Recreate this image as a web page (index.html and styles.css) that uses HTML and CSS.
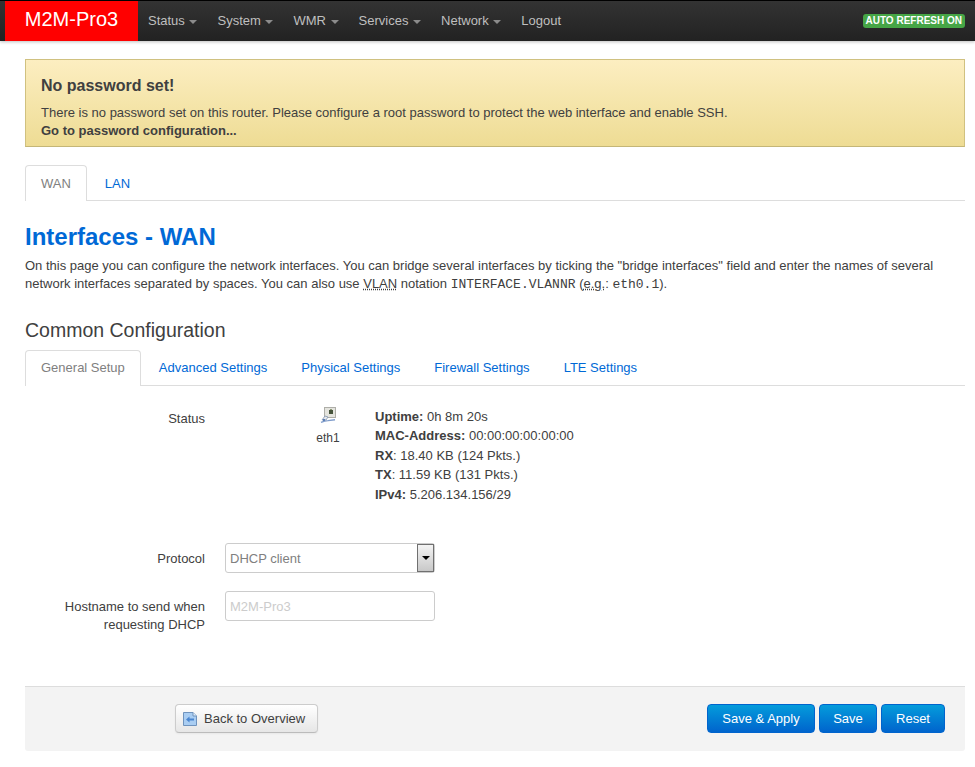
FILE: index.html
```html
<!DOCTYPE html>
<html lang="en">
<head>
    <meta charset="UTF-8">
    <title>M2M-Pro3 - Interfaces - WAN</title>
    <link rel="stylesheet" href="styles.css">
</head>
<body>
    <header class="navbar">
        <a class="brand" href="#">M2M-Pro3</a>
        <nav class="nav-menu">
            <a href="#">Status <span class="caret"></span></a>
            <a href="#">System <span class="caret"></span></a>
            <a href="#">WMR <span class="caret"></span></a>
            <a href="#">Services <span class="caret"></span></a>
            <a href="#">Network <span class="caret"></span></a>
            <a href="#">Logout</a>
        </nav>
        <span class="refresh-label">AUTO REFRESH ON</span>
    </header>

    <main class="container">
        <div class="alert">
            <h4>No password set!</h4>
            <p>There is no password set on this router. Please configure a root password to protect the web interface and enable SSH.</p>
            <a href="#">Go to password configuration...</a>
        </div>

        <ul class="tabs tabs-top">
            <li class="active"><a href="#">WAN</a></li>
            <li><a href="#">LAN</a></li>
        </ul>

        <h2 class="page-title">Interfaces - WAN</h2>
        <p class="page-desc">On this page you can configure the network interfaces. You can bridge several interfaces by ticking the "bridge interfaces" field and enter the names of several network interfaces separated by spaces. You can also use <abbr title="Virtual Local Area Network">VLAN</abbr> notation <code>INTERFACE.VLANNR</code> (<abbr title="for example">e.g.</abbr>: <code>eth0.1</code>).</p>

        <h3 class="section-title">Common Configuration</h3>
        <ul class="tabs tabs-section">
            <li class="active"><a href="#">General Setup</a></li>
            <li><a href="#">Advanced Settings</a></li>
            <li><a href="#">Physical Settings</a></li>
            <li><a href="#">Firewall Settings</a></li>
            <li><a href="#">LTE Settings</a></li>
        </ul>

        <div class="form-row status-row">
            <div class="form-label">Status</div>
            <div class="port">
                <svg width="16" height="16" viewBox="0 0 16 16">
                    <rect x="4.5" y="0.5" width="11" height="10" fill="#e4e4de" stroke="#aeaea8"/>
                    <rect x="9" y="3" width="4" height="4" fill="#45533a"/>
                    <rect x="10" y="2" width="2" height="1" fill="#8a9676"/>
                    <path d="M1 15.3 C4 14 6 13.6 8 13.6 L15 12.8" fill="none" stroke="#7f9ccb" stroke-width="1.4"/>
                    <path d="M2 13 L5 9 L8 10 L6 13 Z" fill="#e6e9ee" stroke="#8394ad" stroke-width="0.8"/>
                    <rect x="3" y="12" width="2" height="2" fill="#5c7fb6"/>
                </svg>
                <span>eth1</span>
            </div>
            <div class="port-info">
                <div><b>Uptime:</b> 0h 8m 20s</div>
                <div><b>MAC-Address:</b> 00:00:00:00:00:00</div>
                <div><b>RX</b>: 18.40 KB (124 Pkts.)</div>
                <div><b>TX</b>: 11.59 KB (131 Pkts.)</div>
                <div><b>IPv4:</b> 5.206.134.156/29</div>
            </div>
        </div>

        <div class="form-row protocol-row">
            <label class="form-label" for="proto">Protocol</label>
            <div class="select-wrap">
                <select id="proto" class="field">
                    <option>DHCP client</option>
                </select>
                <span class="select-arrow"></span>
            </div>
        </div>

        <div class="form-row hostname-row">
            <label class="form-label" for="hostname">Hostname to send when requesting DHCP</label>
            <input id="hostname" class="field" type="text" placeholder="M2M-Pro3">
        </div>

        <div class="actions">
            <a class="btn btn-back" href="#">
                <svg width="14" height="14" viewBox="0 0 14 14">
                    <path d="M0.5 0.5 H10 L13.5 4 V13.5 H0.5 Z" fill="#a9cdf2" stroke="#6f93bd"/>
                    <path d="M10 0.5 V4 H13.5" fill="#e4eefa" stroke="#6f93bd"/>
                    <path d="M3 7.5 L6.5 4.5 V6.5 H11 V8.5 H6.5 V10.5 Z" fill="#4a86d0"/>
                </svg>
                Back to Overview
            </a>
            <div class="actions-right">
                <button class="btn btn-primary btn-apply">Save &amp; Apply</button>
                <button class="btn btn-primary">Save</button>
                <button class="btn btn-primary btn-reset">Reset</button>
            </div>
        </div>
    </main>
</body>
</html>
```

FILE: styles.css
```css
* {
    box-sizing: border-box;
}
body {
    margin: 0;
    background: #fff;
    color: #404040;
    font-family: "Liberation Sans", Arial, sans-serif;
    font-size: 13px;
    line-height: 18px;
}
a {
    text-decoration: none;
}

/* top bar */
.navbar {
    display: flex;
    align-items: center;
    height: 41px;
    border-top: 1px solid #000;
    background: linear-gradient(#333, #222);
    box-shadow: 0 1px 3px rgba(0, 0, 0, 0.25);
}
.brand {
    align-self: stretch;
    width: 133px;
    margin-left: 5px;
    background: #f00;
    color: #fff;
    font-size: 20px;
    line-height: 37px;
    text-align: center;
}
.nav-menu {
    display: flex;
    flex: 1;
}
.nav-menu a {
    padding: 0 10px;
    color: #bfbfbf;
}
.caret {
    display: inline-block;
    margin-left: 1px;
    vertical-align: middle;
    border-top: 4px solid #8c8c8c;
    border-left: 4px solid transparent;
    border-right: 4px solid transparent;
}
.refresh-label {
    margin-right: 10px;
    padding: 0 3px;
    border-radius: 3px;
    background: #46a546;
    color: #fff;
    font-size: 10px;
    font-weight: bold;
    line-height: 14px;
}

.container {
    padding: 18px 10px 0 25px;
}

/* warning */
.alert {
    height: 88px;
    padding: 16px 15px 0;
    border: 1px solid #d0c180;
    border-bottom-color: #c4b677;
    background: linear-gradient(#fceec1, #eedc94);
}
.alert h4 {
    margin: 0 0 8px;
    color: #404040;
    font-size: 16px;
    line-height: 20px;
}
.alert p {
    margin: 0;
}
.alert a {
    color: #404040;
    font-weight: bold;
}

/* tabs */
.tabs {
    display: flex;
    gap: 2px;
    margin: 0;
    padding: 0;
    list-style: none;
    border-bottom: 1px solid #ddd;
}
.tabs li {
    margin-bottom: -1px;
}
.tabs a {
    display: block;
    height: 36px;
    padding: 0 15px;
    border: 1px solid transparent;
    border-bottom: 0;
    color: #0069d6;
    line-height: 35px;
}
.tabs .active a {
    border-color: #ddd;
    border-radius: 4px 4px 0 0;
    background: #fff;
    color: #808080;
}
.tabs-top {
    margin-top: 18px;
}
.tabs-section {
    margin-top: 6px;
}
.tabs-section a {
    line-height: 34px;
}

.page-title {
    margin: 20px 0 0;
    color: #0069d6;
    font-size: 24px;
    line-height: 32px;
}
.page-desc {
    margin: 4px 0 0;
    line-height: 18px;
}
abbr {
    text-decoration: underline dotted;
}
code {
    font-family: "Liberation Mono", monospace;
    font-size: 13px;
}
.section-title {
    margin: 22px 0 0;
    color: #404040;
    font-size: 19.5px;
    font-weight: normal;
    line-height: 28px;
}

/* form rows */
.form-row {
    display: flex;
}
.form-label {
    width: 180px;
    text-align: right;
}
.status-row {
    margin-top: 24px;
}
.port {
    display: flex;
    flex-direction: column;
    align-items: center;
    width: 46px;
    margin-left: 100px;
    margin-top: -3px;
}
.port span {
    margin-top: 6px;
    font-size: 12px;
}
.port-info {
    margin-left: 24px;
    line-height: 19.5px;
    margin-top: -3.5px;
    padding-bottom: 0.5px;
}
.protocol-row {
    margin-top: 38px;
    align-items: center;
}
.protocol-row .form-label {
    padding-top: 2px;
}
.hostname-row {
    margin-top: 18px;
}
.field {
    width: 210px;
    margin-left: 20px;
    border: 1px solid #ccc;
    border-radius: 3px;
    background: #fff;
    color: #808080;
    font-family: inherit;
    font-size: 13px;
}
select.field {
    display: block;
    height: 30px;
    padding: 1px 4px 0;
    appearance: none;
}
input.field {
    height: 30px;
    padding: 1px 4px 0;
}
input.field::placeholder {
    color: #ccc;
    opacity: 1;
}
.select-wrap {
    position: relative;
}
.select-arrow {
    position: absolute;
    top: 1px;
    right: 1px;
    width: 17px;
    height: 28px;
    border: 1px solid #707070;
    background: linear-gradient(#f4f4f4, #c8c8c8);
}
.select-arrow::after {
    content: "";
    position: absolute;
    top: 11px;
    left: 4px;
    border-top: 4px solid #000;
    border-left: 4px solid transparent;
    border-right: 4px solid transparent;
}
.hostname-row .form-label {
    margin-top: 7px;
}

/* bottom bar */
.actions {
    display: flex;
    justify-content: space-between;
    align-items: center;
    height: 65px;
    margin-top: 52px;
    padding: 0 20px 0 150px;
    border-top: 1px solid #ddd;
    border-radius: 0 0 3px 3px;
    background: #f3f3f3;
}
.actions-right {
    display: flex;
    gap: 4px;
}
.btn {
    height: 29px;
    border-radius: 4px;
    font-family: inherit;
    font-size: 13px;
    line-height: 27px;
}
.btn-back {
    display: flex;
    align-items: center;
    gap: 7px;
    width: 143px;
    padding-left: 7px;
    border: 1px solid #ccc;
    border-bottom-color: #bbb;
    background: linear-gradient(#fff, #e6e6e6);
    box-shadow: 0 1px 2px rgba(0, 0, 0, 0.05);
    color: #404040;
}
.btn-primary {
    width: 58px;
    padding: 0;
    border: 1px solid #0064cd;
    background: linear-gradient(#049cdb, #0064cd);
    color: #fff;
}
.btn-apply {
    width: 108px;
}
.btn-reset {
    width: 64px;
}
```
